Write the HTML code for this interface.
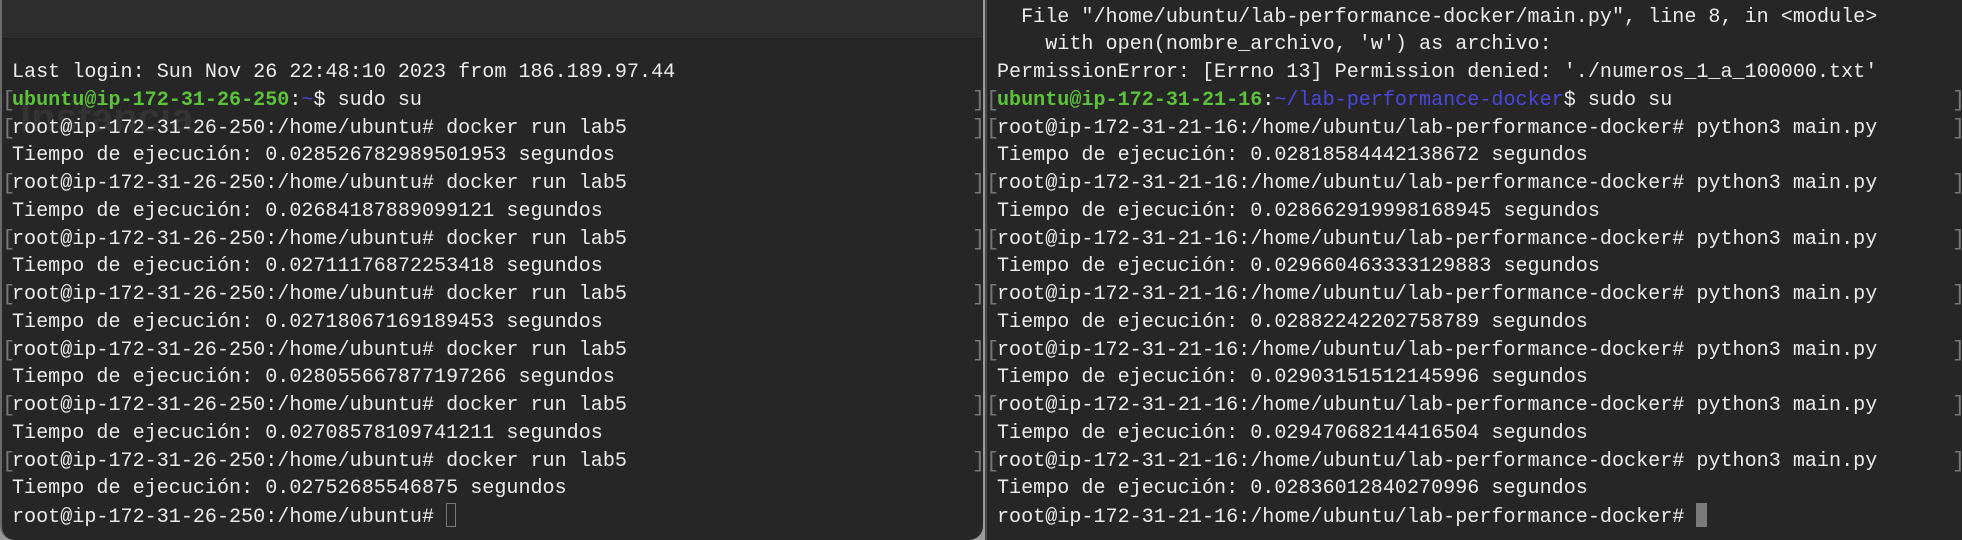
<!DOCTYPE html>
<html><head><meta charset="utf-8"><style>
html,body{margin:0;padding:0;width:1962px;height:540px;overflow:hidden;background:#9a9a9a;}
.pane{position:absolute;top:0;height:540px;background:#262626;overflow:hidden;}
#L{left:0;width:983px;border-left:2px solid #6a6a6a;border-radius:0 0 14px 14px;box-sizing:border-box;}
#R{left:985px;width:977px;border-left:2px solid #4a4a4a;box-sizing:border-box;}
#bar{position:absolute;left:0;top:0;width:983px;height:38px;background:#2d2d2d;border-bottom:1px solid #202020;}
.ln{position:absolute;white-space:pre;font-family:"Liberation Mono",monospace;font-size:20.1px;line-height:28px;color:#ececec;}
.l{left:12px}.r{left:997px}
.g{color:#5cc23a;font-weight:bold;}
.b{color:#4b47db;}
.br{position:absolute;font-family:"Liberation Mono",monospace;font-size:22px;line-height:28px;color:#777;}
.ghost{position:absolute;left:18px;top:96px;font-family:"Liberation Sans",sans-serif;font-size:40px;color:#333;font-weight:bold;}
</style></head><body>
<div class="pane" id="L"><div id="bar"></div><div class="ghost">Instancia</div></div>
<div class="pane" id="R"></div>

<div class="ln l" style="top:59px">Last login: Sun Nov 26 22:48:10 2023 from 186.189.97.44</div>
<div class="ln l" style="top:87px"><span class="g">ubuntu@ip-172-31-26-250</span>:<span class="b">~</span>$ sudo su</div>
<div class="ln l" style="top:115px">root@ip-172-31-26-250:/home/ubuntu# docker run lab5</div>
<div class="ln l" style="top:142px">Tiempo de ejecución: 0.028526782989501953 segundos</div>
<div class="ln l" style="top:170px">root@ip-172-31-26-250:/home/ubuntu# docker run lab5</div>
<div class="ln l" style="top:198px">Tiempo de ejecución: 0.02684187889099121 segundos</div>
<div class="ln l" style="top:226px">root@ip-172-31-26-250:/home/ubuntu# docker run lab5</div>
<div class="ln l" style="top:253px">Tiempo de ejecución: 0.02711176872253418 segundos</div>
<div class="ln l" style="top:281px">root@ip-172-31-26-250:/home/ubuntu# docker run lab5</div>
<div class="ln l" style="top:309px">Tiempo de ejecución: 0.02718067169189453 segundos</div>
<div class="ln l" style="top:337px">root@ip-172-31-26-250:/home/ubuntu# docker run lab5</div>
<div class="ln l" style="top:364px">Tiempo de ejecución: 0.028055667877197266 segundos</div>
<div class="ln l" style="top:392px">root@ip-172-31-26-250:/home/ubuntu# docker run lab5</div>
<div class="ln l" style="top:420px">Tiempo de ejecución: 0.02708578109741211 segundos</div>
<div class="ln l" style="top:448px">root@ip-172-31-26-250:/home/ubuntu# docker run lab5</div>
<div class="ln l" style="top:475px">Tiempo de ejecución: 0.02752685546875 segundos</div>
<div class="ln l" style="top:503px">root@ip-172-31-26-250:/home/ubuntu# <span style="display:inline-block;width:10px;height:24px;border:1.5px solid #777;vertical-align:-5px;box-sizing:border-box"></span></div>

<div class="br" style="left:2px;top:87px">[</div><div class="br" style="left:2px;top:115px">[</div><div class="br" style="left:2px;top:170px">[</div><div class="br" style="left:2px;top:226px">[</div><div class="br" style="left:2px;top:281px">[</div><div class="br" style="left:2px;top:337px">[</div><div class="br" style="left:2px;top:392px">[</div><div class="br" style="left:2px;top:448px">[</div>
<div class="br" style="left:972px;top:87px">]</div><div class="br" style="left:972px;top:115px">]</div><div class="br" style="left:972px;top:170px">]</div><div class="br" style="left:972px;top:226px">]</div><div class="br" style="left:972px;top:281px">]</div><div class="br" style="left:972px;top:337px">]</div><div class="br" style="left:972px;top:392px">]</div><div class="br" style="left:972px;top:448px">]</div>

<div class="ln r" style="top:4px">  File "/home/ubuntu/lab-performance-docker/main.py", line 8, in &lt;module&gt;</div>
<div class="ln r" style="top:31px">    with open(nombre_archivo, 'w') as archivo:</div>
<div class="ln r" style="top:59px">PermissionError: [Errno 13] Permission denied: './numeros_1_a_100000.txt'</div>
<div class="ln r" style="top:87px"><span class="g">ubuntu@ip-172-31-21-16</span>:<span class="b">~/lab-performance-docker</span>$ sudo su</div>
<div class="ln r" style="top:115px">root@ip-172-31-21-16:/home/ubuntu/lab-performance-docker# python3 main.py</div>
<div class="ln r" style="top:142px">Tiempo de ejecución: 0.02818584442138672 segundos</div>
<div class="ln r" style="top:170px">root@ip-172-31-21-16:/home/ubuntu/lab-performance-docker# python3 main.py</div>
<div class="ln r" style="top:198px">Tiempo de ejecución: 0.028662919998168945 segundos</div>
<div class="ln r" style="top:226px">root@ip-172-31-21-16:/home/ubuntu/lab-performance-docker# python3 main.py</div>
<div class="ln r" style="top:253px">Tiempo de ejecución: 0.029660463333129883 segundos</div>
<div class="ln r" style="top:281px">root@ip-172-31-21-16:/home/ubuntu/lab-performance-docker# python3 main.py</div>
<div class="ln r" style="top:309px">Tiempo de ejecución: 0.02882242202758789 segundos</div>
<div class="ln r" style="top:337px">root@ip-172-31-21-16:/home/ubuntu/lab-performance-docker# python3 main.py</div>
<div class="ln r" style="top:364px">Tiempo de ejecución: 0.02903151512145996 segundos</div>
<div class="ln r" style="top:392px">root@ip-172-31-21-16:/home/ubuntu/lab-performance-docker# python3 main.py</div>
<div class="ln r" style="top:420px">Tiempo de ejecución: 0.02947068214416504 segundos</div>
<div class="ln r" style="top:448px">root@ip-172-31-21-16:/home/ubuntu/lab-performance-docker# python3 main.py</div>
<div class="ln r" style="top:475px">Tiempo de ejecución: 0.02836012840270996 segundos</div>
<div class="ln r" style="top:503px">root@ip-172-31-21-16:/home/ubuntu/lab-performance-docker# <span style="display:inline-block;width:11px;height:24px;background:#7a7a7a;vertical-align:-5px"></span></div>

<div class="br" style="left:986px;top:87px">[</div><div class="br" style="left:986px;top:115px">[</div><div class="br" style="left:986px;top:170px">[</div><div class="br" style="left:986px;top:226px">[</div><div class="br" style="left:986px;top:281px">[</div><div class="br" style="left:986px;top:337px">[</div><div class="br" style="left:986px;top:392px">[</div><div class="br" style="left:986px;top:448px">[</div>
<div class="br" style="left:1952px;top:87px">]</div><div class="br" style="left:1952px;top:115px">]</div><div class="br" style="left:1952px;top:170px">]</div><div class="br" style="left:1952px;top:226px">]</div><div class="br" style="left:1952px;top:281px">]</div><div class="br" style="left:1952px;top:337px">]</div><div class="br" style="left:1952px;top:392px">]</div><div class="br" style="left:1952px;top:448px">]</div>
</body></html>
